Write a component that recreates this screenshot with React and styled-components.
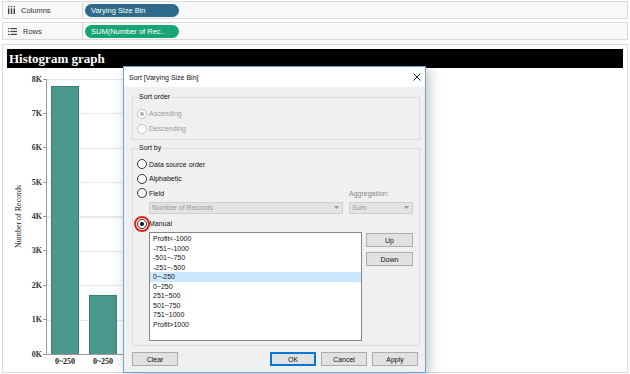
import styled, { createGlobalStyle } from "styled-components";

const GlobalStyle = createGlobalStyle`
  html, body { margin: 0; padding: 0; background: #fff; }
  body {
    width: 630px;
    height: 374px;
    overflow: hidden;
    font-family: "Liberation Sans", Arial, sans-serif;
  }
  * { box-sizing: border-box; }
`;

const bars = [
  { label: "0~250", value: 7800 },
  { label: "0~-250", value: 1720 },
];
const ticks = ["8K", "7K", "6K", "5K", "4K", "3K", "2K", "1K", "0K"];
const PLOT_H = 275;

const listItems = [
  "Profit<-1000",
  "-751~-1000",
  "-501~-750",
  "-251~-500",
  "0~-250",
  "0~250",
  "251~500",
  "501~750",
  "751~1000",
  "Profit>1000",
];

function ColumnsIcon() {
  return (
    <svg width="7" height="8" viewBox="0 0 7 8">
      <g fill="#444">
        <rect x="0" y="0" width="1.4" height="1.2" />
        <rect x="0" y="2.4" width="1.4" height="5.6" />
        <rect x="2.8" y="0" width="1.4" height="1.2" />
        <rect x="2.8" y="2.4" width="1.4" height="5.6" />
        <rect x="5.6" y="0" width="1.4" height="1.2" />
        <rect x="5.6" y="2.4" width="1.4" height="5.6" />
      </g>
    </svg>
  );
}

function RowsIcon() {
  return (
    <svg width="9" height="7" viewBox="0 0 9 7">
      <g fill="#444">
        <rect x="0" y="0" width="1.3" height="1.2" />
        <rect x="2.4" y="0" width="6.6" height="1.2" />
        <rect x="0" y="2.9" width="1.3" height="1.2" />
        <rect x="2.4" y="2.9" width="6.6" height="1.2" />
        <rect x="0" y="5.8" width="1.3" height="1.2" />
        <rect x="2.4" y="5.8" width="6.6" height="1.2" />
      </g>
    </svg>
  );
}

function CloseIcon() {
  return (
    <svg width="8" height="8" viewBox="0 0 8 8">
      <path d="M0.5 0.5 L7.5 7.5 M7.5 0.5 L0.5 7.5" stroke="#222" strokeWidth="1" />
    </svg>
  );
}

function Caret() {
  return (
    <svg width="5" height="3" viewBox="0 0 5 3">
      <path d="M0 0 H5 L2.5 3 Z" fill="#9a9a9a" />
    </svg>
  );
}

function Radio({ checked, disabled, marked, tall, children }) {
  return (
    <RadioRow $disabled={disabled} $tall={tall}>
      <RadioCircle $checked={checked} $disabled={disabled}>
        {marked && <RedRing />}
      </RadioCircle>
      <span>{children}</span>
    </RadioRow>
  );
}

export default function App() {
  return (
    <>
      <GlobalStyle />
      <Page>
        <Shelf>
          <ShelfLabel>
            <ColumnsIcon />
            Columns
          </ShelfLabel>
          <PillArea>
            <Pill $color="#2e6b8a">Varying Size Bin</Pill>
          </PillArea>
        </Shelf>
        <Shelf>
          <ShelfLabel>
            <RowsIcon />
            Rows
          </ShelfLabel>
          <PillArea>
            <Pill $color="#17a673">SUM(Number of Rec..</Pill>
          </PillArea>
        </Shelf>

        <Panel>
          <TitleBar>Histogram graph</TitleBar>
          <ChartArea>
            <AxisTitleWrap>
              <AxisTitle>Number of Records</AxisTitle>
            </AxisTitleWrap>
            <TickColumn>
              {ticks.map((t) => (
                <Tick key={t}>{t}</Tick>
              ))}
            </TickColumn>
            <PlotColumn>
              <Plot>
                {bars.map((b) => (
                  <Bar key={b.label} style={{ height: (b.value / 8000) * PLOT_H }} />
                ))}
              </Plot>
              <XLabels>
                {bars.map((b) => (
                  <XLabel key={b.label}>0~250</XLabel>
                ))}
              </XLabels>
            </PlotColumn>
          </ChartArea>
        </Panel>

        <Dialog>
          <DialogTitle>
            <span>Sort [Varying Size Bin]</span>
            <CloseIcon />
          </DialogTitle>
          <DialogBody>
            <Group>
              <Legend>Sort order</Legend>
              <Radio checked disabled tall>Ascending</Radio>
              <Radio disabled tall>Descending</Radio>
            </Group>

            <Group $second>
              <Legend>Sort by</Legend>
              <Radio>Data source order</Radio>
              <Radio>Alphabetic</Radio>
              <FieldRow>
                <Radio>Field</Radio>
                <AggLabel>Aggregation:</AggLabel>
              </FieldRow>
              <SelectRow>
                <Select $width={194}>
                  Number of Records
                  <Caret />
                </Select>
                <Select $width={64}>
                  Sum
                  <Caret />
                </Select>
              </SelectRow>
              <Radio checked marked>Manual</Radio>
              <ManualRow>
                <ListBox>
                  {listItems.map((it) => (
                    <ListItem key={it} $selected={it === "0~-250"}>
                      {it}
                    </ListItem>
                  ))}
                </ListBox>
                <SideButtons>
                  <Button $w={47}>Up</Button>
                  <Button $w={47}>Down</Button>
                </SideButtons>
              </ManualRow>
            </Group>

            <ButtonRow>
              <Button>Clear</Button>
              <RightButtons>
                <Button $primary>OK</Button>
                <Button>Cancel</Button>
                <Button>Apply</Button>
              </RightButtons>
            </ButtonRow>
          </DialogBody>
        </Dialog>
      </Page>
    </>
  );
}

const Page = styled.div`
  position: relative;
  width: 630px;
  height: 374px;
  padding: 1px 2px 1px 2px;
  display: flex;
  flex-direction: column;
  gap: 3px;
`;

const Shelf = styled.div`
  height: 18px;
  flex: none;
  display: flex;
  align-items: center;
  background: #f8f8f8;
  border: 1px solid #dadada;
`;

const ShelfLabel = styled.div`
  width: 80px;
  height: 100%;
  display: flex;
  align-items: center;
  gap: 6px;
  padding-left: 5px;
  border-right: 1px solid #dadada;
  font-size: 7.5px;
  color: #333;
`;

const PillArea = styled.div`
  padding-left: 2px;
  display: flex;
  align-items: center;
`;

const Pill = styled.div`
  width: 94px;
  height: 13px;
  border-radius: 7px;
  background: ${(p) => p.$color};
  color: #fff;
  font-size: 7.5px;
  line-height: 13px;
  padding-left: 6px;
  white-space: nowrap;
  overflow: hidden;
`;

const Panel = styled.div`
  flex: 1;
  margin-top: 1px;
  border: 1px solid #dcdcdc;
  padding: 4px 4px 0 4px;
  display: flex;
  flex-direction: column;
`;

const TitleBar = styled.div`
  height: 19px;
  background: #000;
  color: #fff;
  font-family: "Liberation Serif", "Times New Roman", serif;
  font-weight: bold;
  font-size: 13px;
  line-height: 19px;
  padding-left: 2px;
`;

const ChartArea = styled.div`
  flex: 1;
  display: flex;
  align-items: flex-start;
  font-family: "Liberation Serif", "Times New Roman", serif;
`;

const AxisTitleWrap = styled.div`
  width: 22px;
  height: ${PLOT_H}px;
  margin-top: 11px;
  display: flex;
  align-items: center;
  justify-content: center;
`;

const AxisTitle = styled.div`
  writing-mode: vertical-rl;
  transform: rotate(180deg);
  font-size: 8px;
  color: #222;
  white-space: nowrap;
`;

const TickColumn = styled.div`
  width: 17px;
  height: ${PLOT_H + 10}px;
  margin-top: 6px;
  display: flex;
  flex-direction: column;
  justify-content: space-between;
`;

const Tick = styled.div`
  height: 10px;
  display: flex;
  align-items: center;
  justify-content: flex-end;
  gap: 1px;
  font-size: 8px;
  font-weight: bold;
  color: #333;
  &::after {
    content: "";
    width: 3px;
    height: 1px;
    background: #999;
  }
`;

const PlotColumn = styled.div`
  display: flex;
  flex-direction: column;
  margin-top: 11px;
`;

const Plot = styled.div`
  width: 220px;
  height: ${PLOT_H + 1}px;
  border-left: 1px solid #999;
  border-bottom: 1px solid #999;
  padding-left: 4px;
  display: flex;
  align-items: flex-end;
  gap: 10px;
  background-image: repeating-linear-gradient(
    to bottom,
    #e8e8e8 0,
    #e8e8e8 1px,
    transparent 1px,
    transparent ${PLOT_H / 8}px
  );
`;

const Bar = styled.div`
  width: 28px;
  background: #4b998e;
  border: 1px solid #3a7f75;
  border-bottom: none;
`;

const XLabels = styled.div`
  display: flex;
`;

const XLabel = styled.div`
  width: 38px;
  text-align: center;
  font-size: 8px;
  font-weight: bold;
  color: #222;
  padding-top: 2px;
`;

const Dialog = styled.div`
  position: absolute;
  left: 123px;
  top: 66px;
  width: 303px;
  height: 307px;
  background: #f0f0f0;
  border: 1px solid #6ea6dc;
  box-shadow: 3px 3px 12px rgba(0, 0, 0, 0.25);
  display: flex;
  flex-direction: column;
  font-size: 7px;
  color: #111;
`;

const DialogTitle = styled.div`
  height: 20px;
  flex: none;
  background: #fff;
  display: flex;
  align-items: center;
  justify-content: space-between;
  padding: 0 4px 0 5px;
`;

const DialogBody = styled.div`
  flex: 1;
  padding: 0 5px 0 8px;
  display: flex;
  flex-direction: column;
`;

const Group = styled.fieldset`
  margin: ${(p) => (p.$second ? "3px" : "5px")} 0 0 0;
  padding: 4px 4px ${(p) => (p.$second ? 4 : 3)}px 4px;
  border: 1px solid #dcdcdc;
  display: flex;
  flex-direction: column;
  min-width: 0;
`;

const Legend = styled.legend`
  padding: 0 1px;
  margin-left: 1px;
  font-size: 7px;
  line-height: 10px;
`;

const RadioRow = styled.div`
  height: ${(p) => (p.$tall ? 15 : 14.5)}px;
  display: flex;
  align-items: center;
  gap: 2px;
  color: ${(p) => (p.$disabled ? "#9a9a9a" : "#111")};
`;

const RadioCircle = styled.span`
  position: relative;
  width: 10px;
  height: 10px;
  flex: none;
  border-radius: 50%;
  background: #fff;
  border: 1px solid ${(p) => (p.$disabled ? "#c4c4c4" : "#333")};
  display: flex;
  align-items: center;
  justify-content: center;
  &::before {
    content: "";
    display: ${(p) => (p.$checked ? "block" : "none")};
    width: 4px;
    height: 4px;
    border-radius: 50%;
    background: ${(p) => (p.$disabled ? "#b0b0b0" : "#111")};
  }
`;

const RedRing = styled.span`
  position: absolute;
  left: -4px;
  top: -4px;
  width: 16px;
  height: 16px;
  border-radius: 50%;
  border: 2px solid #e3241c;
`;

const FieldRow = styled.div`
  display: flex;
  align-items: center;
  justify-content: space-between;
  padding-right: 2px;
`;

const AggLabel = styled.span`
  width: 64px;
  color: #888;
`;

const SelectRow = styled.div`
  display: flex;
  gap: 6px;
  margin: 1px 0 3px 12px;
`;

const Select = styled.div`
  width: ${(p) => p.$width}px;
  height: 12px;
  background: #e3e3e3;
  border: 1px solid #cfcfcf;
  color: #9a9a9a;
  display: flex;
  align-items: center;
  justify-content: space-between;
  padding: 0 3px 0 2px;
`;

const ManualRow = styled.div`
  display: flex;
  gap: 4px;
  margin: 1px 0 0 12px;
`;

const ListBox = styled.div`
  width: 213px;
  height: 109px;
  background: #fff;
  border: 1px solid #828790;
  padding-top: 1px;
`;

const ListItem = styled.div`
  height: 9.5px;
  line-height: 9.5px;
  padding-left: 3px;
  background: ${(p) => (p.$selected ? "#cce8ff" : "transparent")};
`;

const SideButtons = styled.div`
  display: flex;
  flex-direction: column;
  gap: 5px;
  padding-top: 1px;
`;

const Button = styled.div`
  width: ${(p) => p.$w || 46}px;
  height: 14px;
  background: #e1e1e1;
  border: ${(p) => (p.$primary ? "1px solid #0078d7" : "1px solid #adadad")};
  box-shadow: ${(p) => (p.$primary ? "inset 0 0 0 1px #0078d7" : "none")};
  display: flex;
  align-items: center;
  justify-content: center;
  font-size: 7px;
  color: #111;
`;

const ButtonRow = styled.div`
  display: flex;
  align-items: center;
  justify-content: space-between;
  margin-top: 6px;
  padding-right: 2px;
`;

const RightButtons = styled.div`
  display: flex;
  gap: 5px;
`;
